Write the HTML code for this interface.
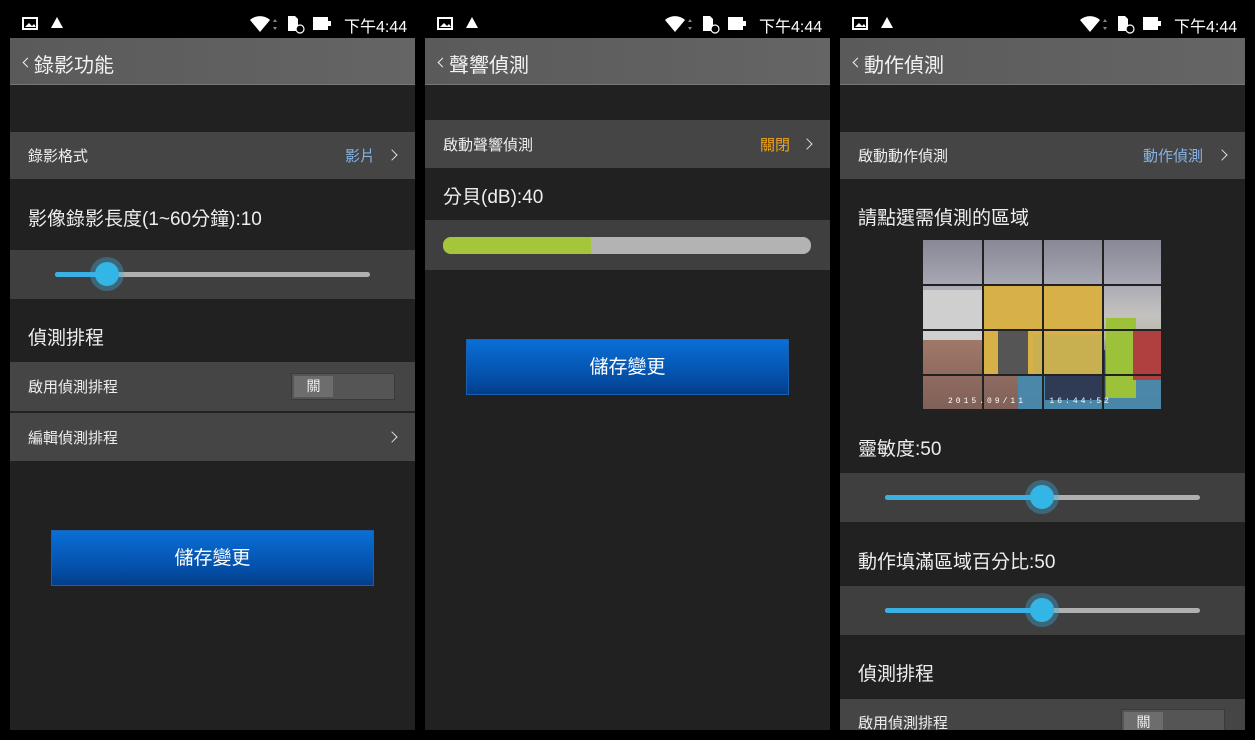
<!DOCTYPE html>
<html><head><meta charset="utf-8"><style>
*{margin:0;padding:0;box-sizing:border-box}
body{width:1255px;height:740px;background:#000;position:relative;overflow:hidden;font-family:"Liberation Sans","Noto Sans CJK TC",sans-serif;color:#eee}
.a{position:absolute}
.panel{position:absolute;top:0;width:405px;height:730px;background:#212121;overflow:hidden}
.sb{position:absolute;left:0;top:0;width:405px;height:38px;background:#000}
.hd{position:absolute;left:0;top:38px;width:405px;height:47px;background:linear-gradient(90deg,#5a5a5a,#656565);border-bottom:1px solid #777}
.hd span{position:absolute;left:24px;top:11px;font-size:20px;color:#f2f2f2}
.row{position:absolute;left:0;width:405px;background:#454545}
.lbl{position:absolute;font-size:15px;color:#eee}
.big{position:absolute;font-size:19px;color:#eee}
.chev{position:absolute;width:8px;height:8px;border-top:1.6px solid #ddd;border-right:1.6px solid #ddd;transform:rotate(45deg)}
.btn{position:absolute;height:56px;background:linear-gradient(#0a6fd6,#044fa8 70%,#023e88);color:#fff;font-size:19px;text-align:center;line-height:56px;border:1px solid #1a5fb0}
.track{position:absolute;height:5px;border-radius:3px;background:#b0b0b0}
.fill{position:absolute;height:5px;border-radius:3px;background:#39b1e4}
.thumb{position:absolute;width:34px;height:34px;border-radius:50%;background:rgba(57,177,228,.35)}
.thumb:after{content:"";position:absolute;left:5px;top:5px;width:24px;height:24px;border-radius:50%;background:#33b5e5}
.tg{position:absolute;width:104px;height:27px;background:#555;border:1px solid #3a3a3a}
.tg b{position:absolute;left:2px;top:2px;width:39px;height:21px;background:#6d6d6d;font-weight:normal;font-size:14px;text-align:center;line-height:21px;color:#eee}
.bk{position:absolute;left:14px;top:21px;width:7px;height:7px;border-left:1.5px solid #eee;border-bottom:1.5px solid #eee;transform:rotate(45deg)}
</style></head><body>

<div class="panel" style="left:10px">
  <div class="sb"></div>
  <div class="hd"><div class="bk"></div><span>錄影功能</span></div>
  <div class="row" style="top:132px;height:47px"><div class="lbl" style="left:18px;top:13px">錄影格式</div><div class="lbl" style="left:335px;top:13px;color:#86b3e3">影片</div><div class="chev" style="left:378px;top:19px"></div></div>
  <div class="big" style="left:18px;top:204px">影像錄影長度(1~60分鐘):10</div>
  <div class="row" style="top:250px;height:49px;background:#3f3f3f">
    <div class="track" style="left:45px;top:22px;width:315px"></div>
    <div class="fill" style="left:45px;top:22px;width:52px"></div>
    <div class="thumb" style="left:80px;top:7px"></div>
  </div>
  <div class="big" style="left:18px;top:323px">偵測排程</div>
  <div class="row" style="top:362px;height:49px"><div class="lbl" style="left:18px;top:14px">啟用偵測排程</div><div class="tg" style="left:281px;top:11px"><b>關</b></div></div>
  <div class="row" style="top:413px;height:48px"><div class="lbl" style="left:18px;top:14px">編輯偵測排程</div><div class="chev" style="left:378px;top:20px"></div></div>
  <div class="btn" style="left:41px;top:530px;width:323px">儲存變更</div>
</div>

<div class="panel" style="left:425px">
  <div class="sb"></div>
  <div class="hd"><div class="bk"></div><span>聲響偵測</span></div>
  <div class="row" style="top:120px;height:48px"><div class="lbl" style="left:18px;top:14px">啟動聲響偵測</div><div class="lbl" style="left:335px;top:14px;color:#f2a31c">關閉</div><div class="chev" style="left:378px;top:20px"></div></div>
  <div class="big" style="left:18px;top:182px">分貝(dB):40</div>
  <div class="row" style="top:220px;height:50px;background:#3f3f3f">
    <div class="a" style="left:18px;top:17px;width:368px;height:17px;border-radius:8px;background:#b3b3b3;overflow:hidden"><div class="a" style="left:0;top:0;width:148px;height:17px;background:#a5c53a"></div></div>
  </div>
  <div class="btn" style="left:41px;top:339px;width:323px">儲存變更</div>
</div>

<div class="panel" style="left:840px">
  <div class="sb"></div>
  <div class="hd"><div class="bk"></div><span>動作偵測</span></div>
  <div class="row" style="top:132px;height:47px"><div class="lbl" style="left:18px;top:13px">啟動動作偵測</div><div class="lbl" style="left:303px;top:13px;color:#86b3e3">動作偵測</div><div class="chev" style="left:378px;top:19px"></div></div>
  <div class="big" style="left:18px;top:203px">請點選需偵測的區域</div>
  <div class="a" style="left:83px;top:240px;width:238px;height:169px;overflow:hidden;background:linear-gradient(#8e8e9a 0%,#a9a9b4 25%,#c4c2bf 45%,#b8b4a8 58%,#6f7a80 70%,#4a88a8 78%,#4a86a8 100%)">
    <div class="a" style="left:0;top:0;width:238px;height:45px;background:linear-gradient(#888896,#a8a8b4)"></div>
    <div class="a" style="left:0;top:100px;width:95px;height:69px;background:linear-gradient(#a07868,#806058)"></div>
    <div class="a" style="left:0;top:50px;width:60px;height:50px;background:#cfcfcf"></div>
    <div class="a" style="left:122px;top:110px;width:60px;height:50px;background:#2f3a55"></div>
    <div class="a" style="left:183px;top:78px;width:30px;height:80px;background:#9cc23a"></div>
    <div class="a" style="left:210px;top:90px;width:28px;height:50px;background:#b04040"></div>
    <div class="a" style="left:60px;top:45px;width:120px;height:90px;background:#d8b048"></div>
    <div class="a" style="left:75px;top:90px;width:30px;height:45px;background:#555"></div>
    <div class="a" style="left:110px;top:95px;width:70px;height:40px;background:#c8b050"></div>
    <div class="a" style="left:59px;top:0;width:2px;height:169px;background:#222"></div>
    <div class="a" style="left:119px;top:0;width:2px;height:169px;background:#222"></div>
    <div class="a" style="left:179px;top:0;width:2px;height:169px;background:#222"></div>
    <div class="a" style="left:0;top:44px;width:238px;height:2px;background:#222"></div>
    <div class="a" style="left:0;top:89px;width:238px;height:2px;background:#222"></div>
    <div class="a" style="left:0;top:134px;width:238px;height:2px;background:#222"></div>
    <div class="a" style="left:25px;top:157px;font-size:8px;color:#fff;letter-spacing:3px;font-family:'Liberation Mono',monospace">2015.09/11&nbsp;&nbsp;&nbsp;16:44:52</div>
  </div>
  <div class="big" style="left:18px;top:434px">靈敏度:50</div>
  <div class="row" style="top:473px;height:49px;background:#3f3f3f">
    <div class="track" style="left:45px;top:22px;width:315px"></div>
    <div class="fill" style="left:45px;top:22px;width:157px"></div>
    <div class="thumb" style="left:185px;top:7px"></div>
  </div>
  <div class="big" style="left:18px;top:547px">動作填滿區域百分比:50</div>
  <div class="row" style="top:586px;height:49px;background:#3f3f3f">
    <div class="track" style="left:45px;top:22px;width:315px"></div>
    <div class="fill" style="left:45px;top:22px;width:157px"></div>
    <div class="thumb" style="left:185px;top:7px"></div>
  </div>
  <div class="big" style="left:18px;top:659px">偵測排程</div>
  <div class="row" style="top:699px;height:31px"><div class="lbl" style="left:18px;top:13px">啟用偵測排程</div><div class="tg" style="left:281px;top:10px"><b>關</b></div></div>
</div>

<svg class="a" style="left:0;top:0" width="1255" height="38">
  <g id="s" fill="#fff">
    <rect x="23" y="18" width="14" height="11" fill="none" stroke="#fff" stroke-width="2"/>
    <path d="M25 27l4-4 3 3 2-2 2 3z"/>
    <path d="M57 17l6 11h-12z"/>
    <path d="M250 20a15 15 0 0 1 20 0l-10 12z"/>
    <path d="M275 19l2 3h-4zM275 30l2-3h-4z" fill="#888"/>
    <path d="M288 16h7l3 3v12h-10z"/>
    <circle cx="300" cy="29" r="4" fill="#000" stroke="#fff" stroke-width="1.2"/>
    <rect x="313" y="17" width="15" height="13"/>
    <rect x="328" y="21" width="3" height="5"/>
  </g>
  <use href="#s" x="415"/>
  <use href="#s" x="830"/>
</svg>
<div class="a" style="left:344px;top:13px;font-size:16px;color:#fff">下午4:44</div>
<div class="a" style="left:759px;top:13px;font-size:16px;color:#fff">下午4:44</div>
<div class="a" style="left:1174px;top:13px;font-size:16px;color:#fff">下午4:44</div>
</body></html>
